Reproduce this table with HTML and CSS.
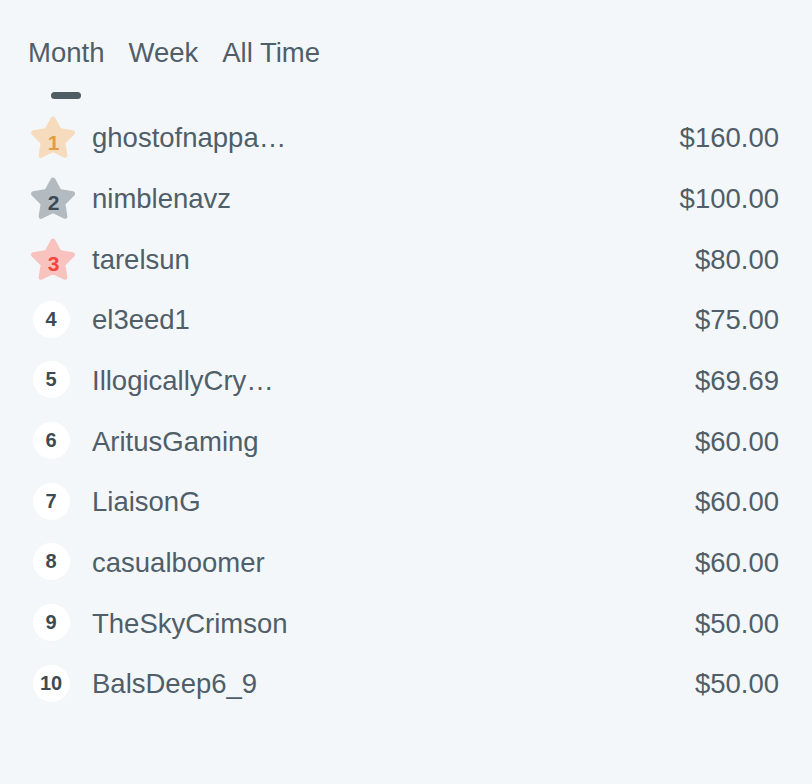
FILE: index.html
```html
<!DOCTYPE html>
<html>
<head>
<meta charset="utf-8">
<link rel="stylesheet" href="styles.css">
</head>
<body>
<div class="board">
  <nav class="tabs">
    <div class="tab active">Month</div>
    <div class="tab">Week</div>
    <div class="tab">All Time</div>
  </nav>
  <ul class="list">
    <li class="row">
      <div class="rank star gold"><svg viewBox="0 0 48 46"><polygon points="24,4 30.2,15.5 43.5,17.8 33.8,27.4 35.9,40.3 24,34.5 12.1,40.3 14.2,27.4 4.5,17.8 17.8,15.5"/></svg><span>1</span></div>
      <div class="name">ghostofnappa…</div><div class="amount">$160.00</div>
    </li>
    <li class="row">
      <div class="rank star silver"><svg viewBox="0 0 48 46"><polygon points="24,4 30.2,15.5 43.5,17.8 33.8,27.4 35.9,40.3 24,34.5 12.1,40.3 14.2,27.4 4.5,17.8 17.8,15.5"/></svg><span>2</span></div>
      <div class="name">nimblenavz</div><div class="amount">$100.00</div>
    </li>
    <li class="row">
      <div class="rank star bronze"><svg viewBox="0 0 48 46"><polygon points="24,4 30.2,15.5 43.5,17.8 33.8,27.4 35.9,40.3 24,34.5 12.1,40.3 14.2,27.4 4.5,17.8 17.8,15.5"/></svg><span>3</span></div>
      <div class="name">tarelsun</div><div class="amount">$80.00</div>
    </li>
    <li class="row"><div class="rank"><span class="circle">4</span></div><div class="name">el3eed1</div><div class="amount">$75.00</div></li>
    <li class="row"><div class="rank"><span class="circle">5</span></div><div class="name">IllogicallyCry…</div><div class="amount">$69.69</div></li>
    <li class="row"><div class="rank"><span class="circle">6</span></div><div class="name">AritusGaming</div><div class="amount">$60.00</div></li>
    <li class="row"><div class="rank"><span class="circle">7</span></div><div class="name">LiaisonG</div><div class="amount">$60.00</div></li>
    <li class="row"><div class="rank"><span class="circle">8</span></div><div class="name">casualboomer</div><div class="amount">$60.00</div></li>
    <li class="row"><div class="rank"><span class="circle">9</span></div><div class="name">TheSkyCrimson</div><div class="amount">$50.00</div></li>
    <li class="row"><div class="rank"><span class="circle">10</span></div><div class="name">BalsDeep6_9</div><div class="amount">$50.00</div></li>
  </ul>
</div>
</body>
</html>
```
FILE: styles.css
```css
html, body {
  margin: 0;
  padding: 0;
  background: #f4f7fa;
}
body {
  width: 812px;
  height: 784px;
  font-family: "Liberation Sans", Arial, sans-serif;
  color: #4f5e68;
}
.board {
  padding: 37px 33px 0 28px;
}
.tabs {
  display: flex;
  gap: 24px;
  height: 71px;
}
.tab {
  font-size: 27.5px;
  line-height: 32px;
  height: 32px;
  position: relative;
}
.tab.active::after {
  content: "";
  position: absolute;
  left: 50%;
  top: 55px;
  width: 30px;
  height: 7px;
  margin-left: -15px;
  border-radius: 4px;
  background: #4e5c64;
}
.list {
  list-style: none;
  margin: 0;
  padding: 0 0 0 1px;
}
.row {
  display: flex;
  align-items: center;
  height: 60.67px;
  font-size: 27.5px;
}
.rank {
  width: 48px;
  height: 46px;
  flex: none;
  display: flex;
  align-items: center;
  justify-content: center;
  position: relative;
  margin-right: 15px;
}
.star svg {
  position: absolute;
  left: 0;
  top: 0;
  width: 48px;
  height: 46px;
}
.star polygon {
  stroke-width: 5;
  stroke-linejoin: round;
}
.star span {
  position: relative;
  font-size: 21px;
  font-weight: bold;
  margin-top: 9px;
  margin-left: 1px;
}
.gold polygon { fill: #f6dcbd; stroke: #f6dcbd; }
.gold span { color: #e39b4b; }
.silver polygon { fill: #b3bbc0; stroke: #b3bbc0; }
.silver span { color: #3d4a53; }
.bronze polygon { fill: #f8c3bf; stroke: #f8c3bf; }
.bronze span { color: #f2463c; }
.circle {
  width: 37px;
  height: 37px;
  border-radius: 50%;
  background: #ffffff;
  display: flex;
  align-items: center;
  justify-content: center;
  font-size: 20px;
  font-weight: bold;
  color: #3d4a53;
  margin-right: 4px;
  margin-top: -2px;
}
.name {
  flex: 1;
}
.amount {
  text-align: right;
}
```
